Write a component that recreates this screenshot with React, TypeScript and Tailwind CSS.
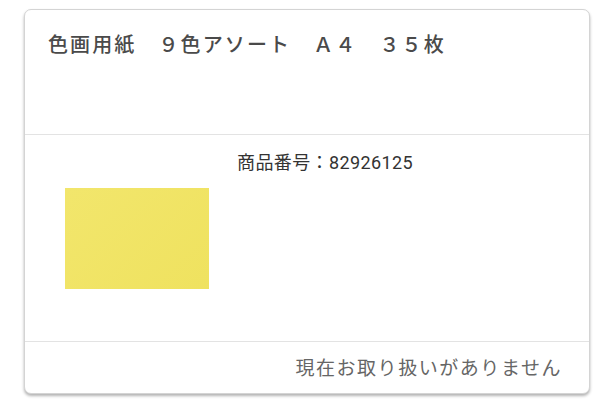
import React from "react";

export default function App() {
  return (
    <div className="w-[613px] h-[410px] bg-white pt-[9px] pl-[24px]" style={{ fontFamily: '"Noto Sans CJK JP", "Noto Sans", sans-serif' }}>
      <div className="w-[566px] h-[385px] bg-white rounded-[7px] border border-[#d4d4d4] shadow-[0_2px_3px_rgba(0,0,0,0.3)] flex flex-col overflow-hidden">
        <div className="h-[125px] border-b border-[#e3e3e3] px-[23px] pt-[20px]">
          <h1 className="text-[20px] leading-[28px] font-medium text-[#4a4a4a] tracking-[2.1px] whitespace-nowrap">
            色画用紙　９色アソート　Ａ４　３５枚
          </h1>
        </div>
        <div className="h-[207px] border-b border-[#e3e3e3] flex flex-col">
          <div className="pt-[15px] pl-[212px] text-[18px] leading-[26px] text-[#333] tracking-[0.4px]" style={{ fontFamily: 'Roboto, "Noto Sans CJK JP", sans-serif' }}>
            商品番号：82926125
          </div>
          <div className="pl-[40px] pt-[12px]">
            <div className="w-[144px] h-[101px] bg-[linear-gradient(135deg,#f2e66c,#efe25f)]" />
          </div>
        </div>
        <div className="flex-1 flex items-center justify-end pr-[27px] pb-[2px]">
          <span className="text-[19px] leading-[26px] text-[#666] tracking-[1.55px]">現在お取り扱いがありません</span>
        </div>
      </div>
    </div>
  );
}
